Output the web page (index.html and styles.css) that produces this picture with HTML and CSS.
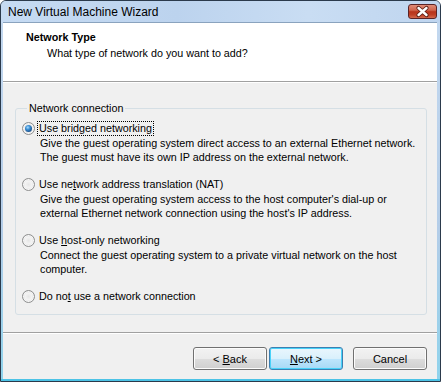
FILE: index.html
```html
<!DOCTYPE html>
<html lang="en">
<head>
  <meta charset="UTF-8" />
  <title>New Virtual Machine Wizard</title>
  <link rel="stylesheet" href="styles.css">
</head>
<body>
  <div class="window">
    <div class="titlebar">
      <span class="title">New Virtual Machine Wizard</span>
      <span class="close">
        <svg width="27" height="13" viewBox="0 0 27 13">
          <path d="M9.5 3 L17.5 10 M17.5 3 L9.5 10" stroke="#5c1d14" stroke-width="4.2" stroke-linecap="round" />
          <path d="M9.5 3 L17.5 10 M17.5 3 L9.5 10" stroke="#fff" stroke-width="2.4" stroke-linecap="round" />
        </svg>
      </span>
    </div>
    <div class="client">
      <div class="header">
        <div class="heading">Network Type</div>
        <div class="subheading">What type of network do you want to add?</div>
      </div>
      <div class="main">
        <fieldset class="group">
          <legend>Network connection</legend>
          <div class="option">
            <div class="option-row"><span class="radio checked"></span><span class="label focused">Use bridged networking</span></div>
            <div class="desc">Give the guest operating system direct access to an external Ethernet network.<br>The guest must have its own IP address on the external network.</div>
          </div>
          <div class="option">
            <div class="option-row"><span class="radio"></span><span class="label">Use ne<u>t</u>work address translation (NAT)</span></div>
            <div class="desc">Give the guest operating system access to the host computer's dial-up or<br>external Ethernet network connection using the host's IP address.</div>
          </div>
          <div class="option">
            <div class="option-row"><span class="radio"></span><span class="label">Use <u>h</u>ost-only networking</span></div>
            <div class="desc">Connect the guest operating system to a private virtual network on the host<br>computer.</div>
          </div>
          <div class="option">
            <div class="option-row"><span class="radio"></span><span class="label">Do no<u>t</u> use a network connection</span></div>
          </div>
        </fieldset>
      </div>
      <div class="footer">
        <button class="btn">&lt; <u>B</u>ack</button>
        <button class="btn default"><u>N</u>ext &gt;</button>
        <button class="btn cancel">Cancel</button>
      </div>
    </div>
  </div>
</body>
</html>
```

FILE: styles.css
```css
* {
  margin: 0;
  padding: 0;
  box-sizing: border-box;
}

html, body {
  width: 441px;
  height: 382px;
  overflow: hidden;
  background: #fff;
  font-family: 'Liberation Sans', Arial, sans-serif;
  font-size: 10.75px;
  color: #000;
}

.window {
  width: 441px;
  height: 382px;
  display: flex;
  flex-direction: column;
  border: 1px solid #2b3a4c;
  border-radius: 6px 6px 0 0;
  padding: 0 3px 2px 2px;
  background: linear-gradient(to bottom, #c4d9f0, #b4cde8 60%, #8fd3ec);
  box-shadow: inset 0 -2px 0 #4cc3e6;
}

.titlebar {
  height: 22px;
  display: flex;
  align-items: flex-start;
  justify-content: space-between;
  padding: 3px 0 0 6px;
  margin: 0 -3px 0 -2px;
  background: linear-gradient(to right, #c6dbf3, #bcd3ee 40%, #c9ddf3 70%, #bfd5ef);
  border-radius: 5px 5px 0 0;
}

.title {
  font-size: 12px;
  line-height: 16px;
  color: #000;
  padding-left: 1px;
}

.close {
  width: 29px;
  height: 15px;
  margin-right: 3px;
  border: 1px solid #5a2326;
  border-radius: 3px;
  background: linear-gradient(to bottom, #e08c78, #d0654d 40%, #b8341c 52%, #bf3f25 75%, #d46a4e);
  display: flex;
  align-items: center;
  justify-content: center;
}

.client {
  flex: 1;
  display: flex;
  flex-direction: column;
  background: #f0f0f0;
  border-top: 1px solid #8aa3be;
  margin-top: -1px;
}

.header {
  height: 59px;
  flex: none;
  background: #fff;
  border-bottom: 1px solid #a0a0a0;
  padding: 8px 0 0 23px;
  line-height: 13px;
}

.heading {
  font-weight: bold;
}

.subheading {
  margin-top: 3px;
  padding-left: 21px;
}

.main {
  height: 250px;
  flex: none;
  padding: 19px 10px 0 12px;
  border-top: 1px solid #fff;
}

.group {
  height: 213px;
  border: 1px solid #d5dfe5;
  border-radius: 3px;
  padding: 6px 8px 0 6px;
  min-inline-size: 0;
}

.group legend {
  margin-left: 5px;
  padding: 0 2px;
  line-height: 13px;
  color: #000;
}

.option {
  margin-bottom: 13px;
}

.option-row {
  height: 15px;
  display: flex;
  align-items: center;
}

.radio {
  width: 13px;
  height: 13px;
  border-radius: 50%;
  border: 1px solid #8e8f8f;
  background: radial-gradient(circle at 50% 50%, #e6e6e6 0, #f4f4f4 45%, #dcdcdc 70%, #c8c8c8 100%);
  box-shadow: inset 0 0 0 1px #f6f6f6;
  position: relative;
  flex: none;
}

.radio.checked::after {
  content: '';
  position: absolute;
  left: 2px;
  top: 2px;
  width: 7px;
  height: 7px;
  border-radius: 50%;
  background: radial-gradient(circle at 40% 35%, #a7dcff 0, #3a8ed3 35%, #1a4f8a 75%, #0d3466 100%);
}

.label {
  margin-left: 2px;
  padding: 0 1px;
  border: 1px dotted transparent;
  line-height: 13px;
  white-space: nowrap;
}

.label.focused {
  border-color: #000;
}

.desc {
  padding-left: 18px;
  line-height: 14px;
  white-space: nowrap;
}

.footer {
  flex: 1;
  border-top: 1px solid #a0a0a0;
  box-shadow: inset 0 1px 0 #fff;
  display: flex;
  justify-content: flex-end;
  align-items: flex-start;
  padding: 14px 10px 0 0;
  gap: 2px;
}

.btn {
  width: 74px;
  height: 23px;
  font-family: inherit;
  font-size: 11px;
  color: #000;
  border: 1px solid #707070;
  border-radius: 3px;
  background: linear-gradient(to bottom, #f2f2f2, #ebebeb 50%, #dddddd 51%, #cfcfcf);
  box-shadow: inset 0 0 0 1px #fcfcfc;
}

.btn.default {
  border-color: #3c7fb1;
  background: linear-gradient(to bottom, #eaf6fd, #d9f0fc 50%, #bee6fd 51%, #a7d9f5);
  box-shadow: inset 0 0 0 1px #48d2f9;
}

.btn.cancel {
  margin-left: 8px;
}
```
